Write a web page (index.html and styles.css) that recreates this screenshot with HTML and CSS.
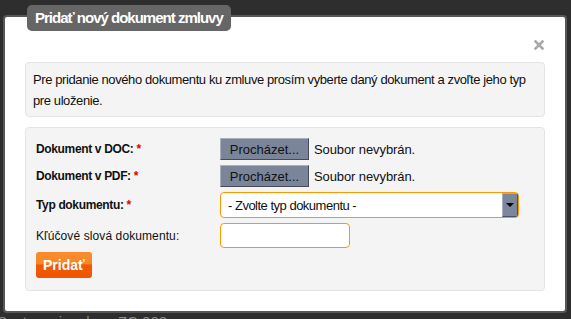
FILE: index.html
```html
<!DOCTYPE html>
<html lang="sk">

<head>
  <meta charset="UTF-8">
  <meta name="viewport" content="width=device-width, initial-scale=1.0">
  <title>Pridať nový dokument zmluvy</title>
  <link rel="stylesheet" href="styles.css">
</head>

<body>

  <div class="dialog">
    <div class="dialog-title">Pridať nový dokument zmluvy</div>
    <a class="dialog-close" href="#" title="Zavrieť">
      <svg width="10" height="10" viewBox="0 0 10 10">
        <path d="M1.5 1.5 L8.5 8.5 M8.5 1.5 L1.5 8.5" stroke="#a9a9a9" stroke-width="2.6" stroke-linecap="square" />
      </svg>
    </a>

    <!-- Info -->
    <div class="info-box">
      Pre pridanie nového dokumentu ku zmluve prosím vyberte daný dokument a zvoľte jeho typ pre uloženie.
    </div>

    <!-- Upload form -->
    <form class="form-box" id="documentForm">
      <div class="form-row">
        <label class="required">Dokument v DOC: <span class="star">*</span></label>
        <button type="button" class="browse">Procházet...</button>
        <span class="file-name">Soubor nevybrán.</span>
      </div>

      <div class="form-row">
        <label class="required">Dokument v PDF: <span class="star">*</span></label>
        <button type="button" class="browse">Procházet...</button>
        <span class="file-name">Soubor nevybrán.</span>
      </div>

      <div class="form-row row-select">
        <label class="required" for="docType">Typ dokumentu: <span class="star">*</span></label>
        <div class="select-box">
          <select id="docType">
            <option>- Zvolte typ dokumentu -</option>
          </select>
          <span class="select-arrow"></span>
        </div>
      </div>

      <div class="form-row row-input">
        <label for="keywords">Kľúčové slová dokumentu:</label>
        <input type="text" id="keywords">
      </div>

      <button type="button" class="submit">Pridať</button>
    </form>
  </div>

  <div class="page-text">Sestovaci zmluvu ZC 002</div>

</body>

</html>
```

FILE: styles.css
```css
body {
  margin: 0;
  background-color: #2e2e2e;
  font-family: "Liberation Sans", Arial, sans-serif;
  color: #111;
  overflow: hidden;
}

.dialog {
  position: relative;
  box-sizing: border-box;
  width: 564px;
  margin: 15px 0 0 3px;
  padding: 45px 20px 20px 20px;
  background-color: #fff;
  border: 2px solid #585858;
  border-radius: 4px;
}

.dialog-title {
  position: absolute;
  top: -12px;
  left: 22px;
  height: 26px;
  padding: 0 8px;
  background-color: #666;
  border-radius: 5px;
  color: #fff;
  font-size: 15px;
  font-weight: bold;
  letter-spacing: -1px;
  line-height: 26px;
}

.dialog-close {
  position: absolute;
  top: 23px;
  right: 21px;
  width: 10px;
  height: 10px;
  line-height: 0;
}

.info-box {
  padding: 6px 7px 5px 7px;
  background-color: #f4f4f4;
  border: 1px solid #e4e4e4;
  border-radius: 4px;
  font-size: 13px;
  letter-spacing: -0.4px;
  line-height: 21px;
}

.form-box {
  margin: 10px 0 0 0;
  padding: 10px 10px 12px 10px;
  background-color: #f4f4f4;
  border: 1px solid #e4e4e4;
  border-radius: 4px;
}

.form-row {
  display: flex;
  align-items: center;
  height: 22px;
  margin-bottom: 5px;
}

.form-row label {
  flex: 0 0 184px;
  font-size: 12px;
}

label.required {
  font-weight: bold;
  letter-spacing: -0.35px;
}

.star {
  color: #e00000;
}

.browse {
  box-sizing: border-box;
  width: 89px;
  height: 22px;
  padding: 0;
  background-color: #7b859a;
  border: 1px solid;
  border-color: #a9b1bf #454b57 #454b57 #a9b1bf;
  color: #111;
  font-family: inherit;
  font-size: 13px;
}

.file-name {
  margin-left: 5px;
  font-size: 13px;
  letter-spacing: -0.1px;
}

.row-select {
  height: 26px;
}

.select-box {
  box-sizing: border-box;
  display: flex;
  width: 299px;
  height: 26px;
  background-color: #fff;
  border: 1px solid #ff9800;
  border-radius: 4px;
  overflow: hidden;
}

.select-box select {
  flex: 1;
  appearance: none;
  -webkit-appearance: none;
  padding: 0 0 0 7px;
  background: transparent;
  border: none;
  outline: none;
  color: #111;
  font-family: inherit;
  font-size: 13px;
  letter-spacing: -0.5px;
}

.select-arrow {
  box-sizing: border-box;
  display: flex;
  align-items: center;
  justify-content: center;
  width: 16px;
  background-color: #7b879d;
  border: 1px solid;
  border-color: #a7b0c0 #4b5262 #4b5262 #a7b0c0;
}

.select-arrow::after {
  content: "";
  border-left: 4px solid transparent;
  border-right: 4px solid transparent;
  border-top: 4px solid #000;
}

.row-input {
  height: 25px;
  margin-bottom: 4px;
}

.row-input label {
  font-weight: normal;
  letter-spacing: 0.1px;
}

.row-input input {
  box-sizing: border-box;
  width: 130px;
  height: 25px;
  background-color: #fff;
  border: 1px solid #ff9800;
  border-radius: 4px;
}

.submit {
  display: block;
  height: 26px;
  padding: 0 7px;
  background: linear-gradient(to bottom, #f98c2e 0%, #f7882a 45%, #ef5a05 50%, #f05500 100%);
  border: none;
  border-radius: 3px;
  color: #fff;
  font-family: inherit;
  font-size: 14px;
  font-weight: bold;
}

.page-text {
  margin: 0 0 0 -3px;
  color: #8a8a8a;
  font-size: 15px;
}
```
